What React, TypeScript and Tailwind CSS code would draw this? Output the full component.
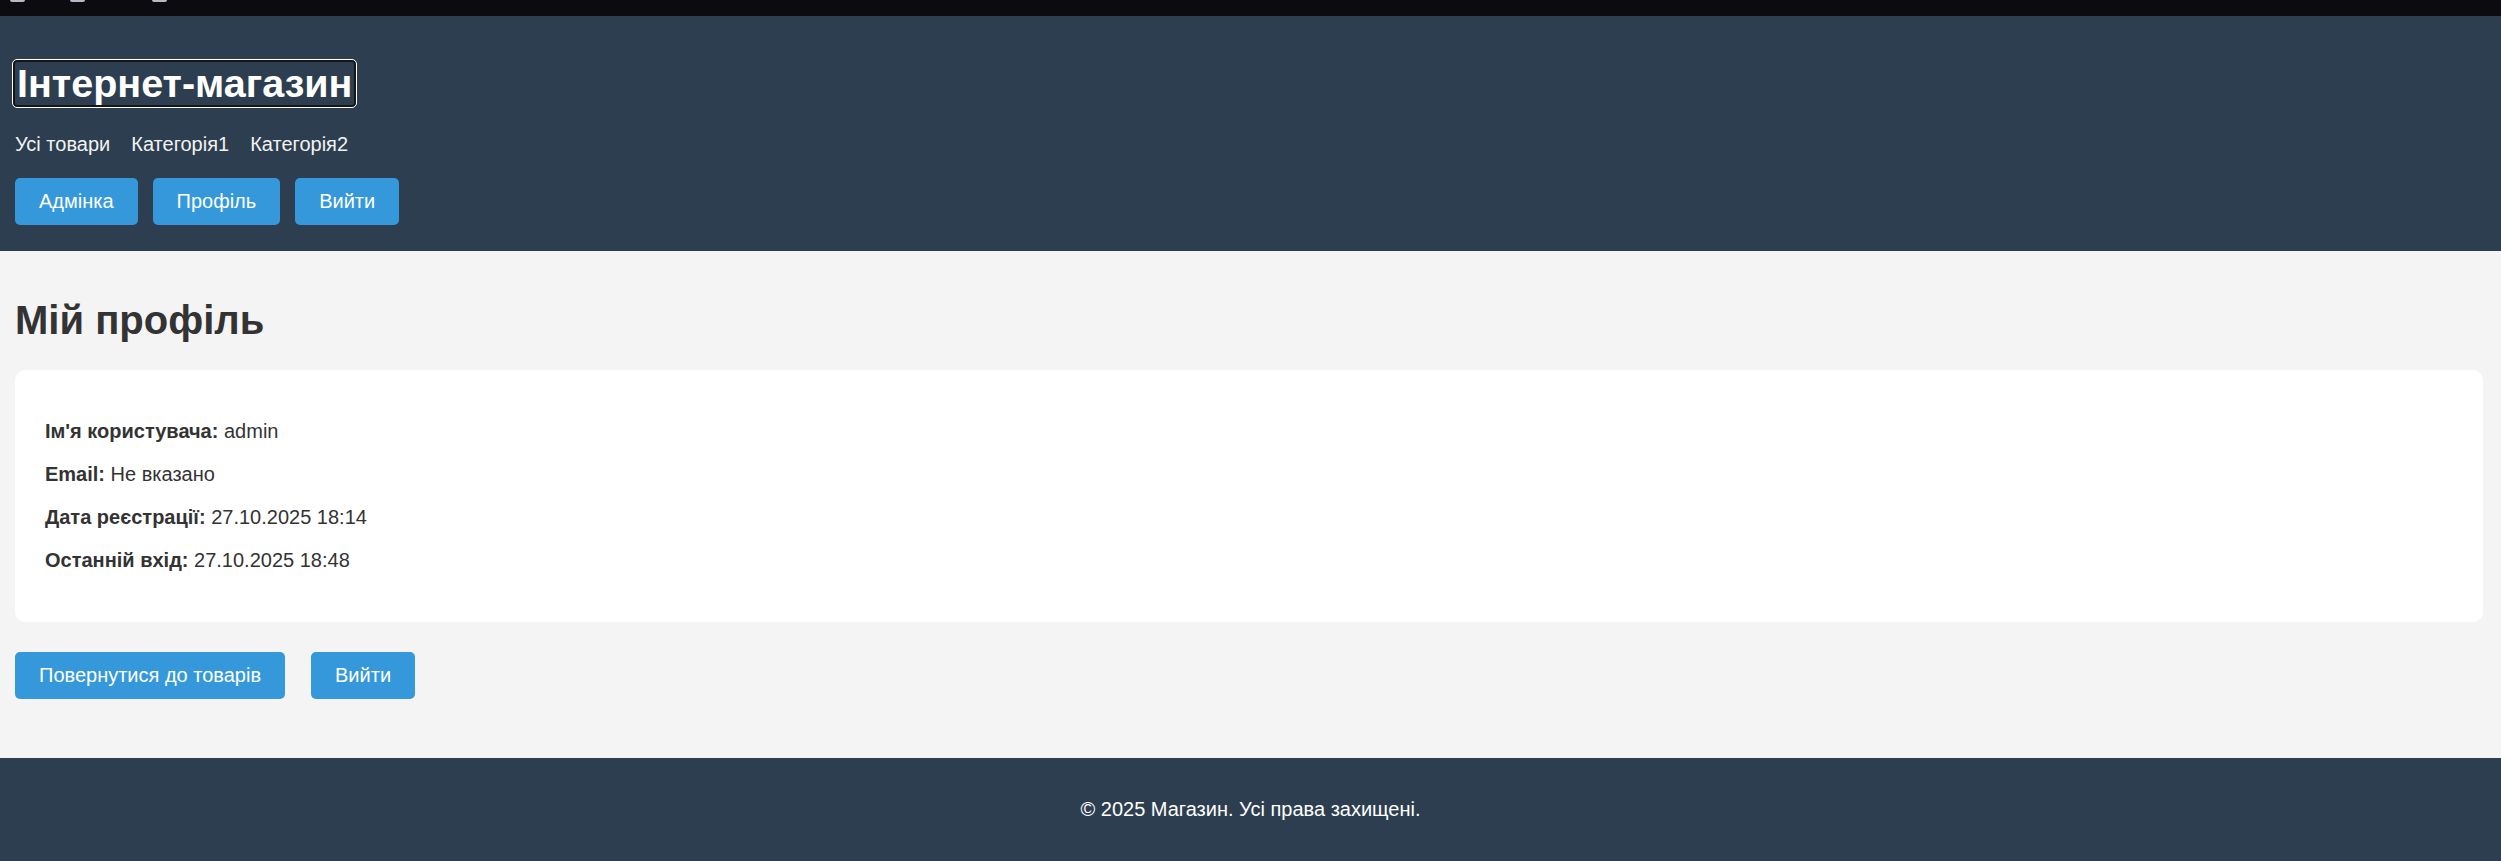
import React from "react";

const navLinks = ["Усі товари", "Категорія1", "Категорія2"];
const headerButtons = ["Адмінка", "Профіль", "Вийти"];

const profileRows = [
  { label: "Ім'я користувача:", value: "admin" },
  { label: "Email:", value: "Не вказано" },
  { label: "Дата реєстрації:", value: "27.10.2025 18:14" },
  { label: "Останній вхід:", value: "27.10.2025 18:48" },
];

function Button({ children }: { children: React.ReactNode }) {
  return (
    <button className="h-[47px] px-[24px] rounded-[5px] bg-[#3498db] text-white text-[20px] leading-[23px]">
      {children}
    </button>
  );
}

export default function App() {
  return (
    <div className="w-full h-[861px] flex flex-col bg-[#f4f4f4] font-['Liberation_Sans',Arial,sans-serif] text-[#333]">
      {/* верхня смуга */}
      <div className="h-[16px] bg-[#0b0b10] flex items-start gap-[45px] pl-[10px] shrink-0">
        <div className="w-[15px] h-[2px] bg-[#bdb6c8] rounded-b-sm" />
        <div className="w-[15px] h-[2px] bg-[#bdb6c8] rounded-b-sm" />
        <div className="w-[15px] h-[2px] bg-[#bdb6c8] rounded-b-sm ml-[22px]" />
      </div>

      <header className="bg-[#2c3e50] text-white pl-[15px] pt-[44px] pb-[26px] shrink-0">
        <h1 className="m-0">
          <a className="inline-block -ml-[2px] px-[2px] border-2 border-[#151515] outline outline-1 outline-white rounded-[4px] text-[39.5px] leading-[43px] font-bold text-white">
            Інтернет-магазин
          </a>
        </h1>
        <nav className="flex gap-[21px] mt-[26px] text-[20px] leading-[23px] text-[#f2f2f2]">
          {navLinks.map((link) => (
            <a key={link}>{link}</a>
          ))}
        </nav>
        <div className="flex gap-[15px] mt-[22px]">
          {headerButtons.map((b) => (
            <Button key={b}>{b}</Button>
          ))}
        </div>
      </header>

      <main className="flex-1 pt-[46px] pl-[15px] pr-[18px]">
        <h2 className="text-[40px] leading-[46px] font-bold text-[#333]">Мій профіль</h2>
        <div className="mt-[27px] bg-white rounded-[10px] px-[30px] py-[50px] flex flex-col gap-[20px] text-[20px] leading-[23px]">
          {profileRows.map((row) => (
            <p key={row.label}>
              <strong className="font-bold">{row.label}</strong> {row.value}
            </p>
          ))}
        </div>
        <div className="flex gap-[26px] mt-[30px]">
          <Button>Повернутися до товарів</Button>
          <Button>Вийти</Button>
        </div>
      </main>

      <footer className="h-[103px] shrink-0 bg-[#2c3e50] text-white flex items-center justify-center text-[20px] leading-[23px]">
        <p>© 2025 Магазин. Усі права захищені.</p>
      </footer>
    </div>
  );
}
